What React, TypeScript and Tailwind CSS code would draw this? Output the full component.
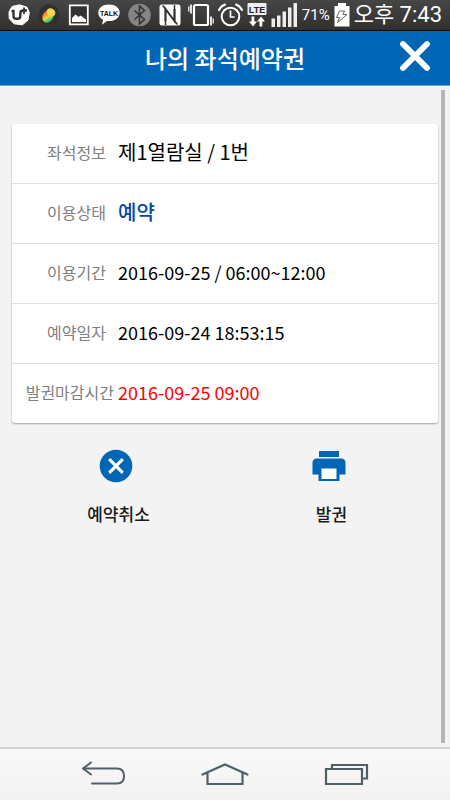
import type { ReactNode } from 'react'

const ROWS = [
  { label: '좌석정보', value: '제1열람실 / 1번', style: 'text-xl text-black' },
  { label: '이용상태', value: '예약', style: 'text-xl font-medium text-[#0049a5]' },
  { label: '이용기간', value: '2016-09-25 / 06:00~12:00', style: 'text-lg text-black' },
  { label: '예약일자', value: '2016-09-24 18:53:15', style: 'text-lg text-black' },
  { label: '발권마감시간', value: '2016-09-25 09:00', style: 'text-lg text-[#ff0000]' },
]

function CarrierIcon() {
  return (
    <svg width="22" height="22" viewBox="0 0 22 22">
      <path d="M4 2.5 11.5.8 19 3.2 21.3 8.5 20 16 14.5 20.8 6 19.8 1.2 14.5 1 8Z" fill="#fff" stroke="#fff" strokeLinejoin="round" />
      <path d="M3.500 7h2v5q0 2.800 2.800 2.800h1.200q2.800 0 2.800-2.800V9.500q0-3 3-3H19" fill="none" stroke="#333" strokeWidth="2.400" />
      <path d="M16 3.500v6.500" stroke="#333" strokeWidth="1.800" />
    </svg>
  )
}

function BallIcon() {
  return (
    <svg width="22" height="22" viewBox="0 0 22 22">
      <defs>
        <linearGradient id="ball" x1="0" y1="0.1" x2="1" y2="0.9">
          <stop offset="0.1" stopColor="#e0524a" />
          <stop offset="0.35" stopColor="#f59a35" />
          <stop offset="0.55" stopColor="#e2dc48" />
          <stop offset="0.75" stopColor="#54c568" />
          <stop offset="1" stopColor="#2e80d0" />
        </linearGradient>
      </defs>
      <circle cx="11" cy="11" r="10.5" fill="#303030" />
      <ellipse cx="10" cy="12.300" rx="5.300" ry="6.800" transform="rotate(28 10 12.300)" fill="url(#ball)" />
      <ellipse cx="13" cy="8.300" rx="4.600" ry="3.800" transform="rotate(35 13 8.300)" fill="#f3d552" />
    </svg>
  )
}

function PictureIcon() {
  return (
    <svg width="22" height="22" viewBox="0 0 22 22">
      <path d="M1.800 1.300h18v19h-18Z" fill="#333" stroke="#fff" strokeWidth="1.800" />
      <path d="M4 18v-4l3.500-3.500 3 2.500 2-1.500 5.500 4V18Z" fill="#fff" />
    </svg>
  )
}

function TalkIcon() {
  return (
    <svg width="22" height="22" viewBox="0 0 22 22">
      <path d="M11 .5C4.800.5.300 4 .300 8.800c0 3.200 2 5.500 4.700 6.900L4 20.800l5-3.900q1 .2 2 .2c6.200 0 10.700-3.500 10.700-8.300S17.200.5 11 .5Z" fill="#fff" />
      <text x="11" y="11.500" textAnchor="middle" fontSize="7" fontWeight="700" fill="#111" className="font-['Liberation_Sans',sans-serif]">
        TALK
      </text>
    </svg>
  )
}

function BluetoothIcon() {
  return (
    <svg width="23" height="24" viewBox="0 0 23 24">
      <circle cx="11.500" cy="12" r="11.300" fill="#858585" />
      <path d="m6.500 7.500 10 9-5 4.500V3l5 4.500-10 9" fill="none" stroke="#343434" strokeWidth="1.600" />
    </svg>
  )
}

function NfcIcon() {
  return (
    <svg width="22" height="24" viewBox="0 0 22 24">
      <rect x=".5" y="1.500" width="21" height="21" rx="2.500" fill="#fff" />
      <path d="M6.500 18V6l9 12V6" fill="none" stroke="#333" strokeWidth="2" />
      <path d="m3.500 2.500 3 3.500v16M18.500 21.500l-3-3.500V2" fill="none" stroke="#333" strokeWidth="1.500" />
    </svg>
  )
}

function VibrateIcon() {
  return (
    <svg width="26" height="24" viewBox="0 0 26 24" fill="none" stroke="#fff">
      <rect x="6" y="2" width="14" height="20" rx="1.500" strokeWidth="2.200" />
      <path d="M3 1.500v9M23 13.500v9" strokeWidth="1.700" />
      <path d="M.8 3.500v5M25.200 15.500v5" strokeWidth="1.200" />
    </svg>
  )
}

function AlarmIcon() {
  return (
    <svg width="25" height="24" viewBox="0 0 25 24" fill="none" stroke="#fff" strokeLinecap="round">
      <circle cx="12.500" cy="13.500" r="8.800" strokeWidth="2" />
      <path d="M12.500 8v6H16" strokeWidth="1.700" />
      <path d="M1 7Q3 3 7 1.500M24 7q-2-4-6-5.500" strokeWidth="2" />
    </svg>
  )
}

function LteIcon() {
  return (
    <svg width="20" height="26" viewBox="0 0 20 26">
      <rect x=".5" y="1" width="19" height="12" rx="1" fill="#eee" />
      <text x="10" y="10.500" textAnchor="middle" fontSize="9" fontWeight="700" fill="#222" className="font-['Liberation_Sans',sans-serif]">
        LTE
      </text>
      <path d="M4.500 14.500h2.800v5H10L6 24.500 2 19.500h2.500ZM12.500 24.500h2.800v-5H18L14 14.500l-4 5h2.500Z" fill="#fff" />
    </svg>
  )
}

function SignalIcon() {
  return (
    <svg width="27" height="24" viewBox="0 0 27 24" fill="#eee">
      <path d="M.5 15.500h3.500V24H.5ZM6 12.500h3.500V24H6ZM11.500 8.500H15V24h-3.500ZM17 4.500h3.500V24H17ZM22.500 0H26v24h-3.500Z" />
    </svg>
  )
}

function BatteryIcon() {
  return (
    <svg width="16" height="24" viewBox="0 0 16 24">
      <path d="M4 0h8v3h3.500v20.500H.5V3H4Z" fill="#fff" />
      <path d="M5.500 8h5L9 11.500h4L3.500 19.500l2-5h-3Z" fill="#fff" stroke="#555" strokeWidth=".9" strokeLinejoin="round" />
    </svg>
  )
}

function StatusBar() {
  return (
    <div className="flex h-[31px] shrink-0 items-center justify-between border-b border-[#150d0b] bg-linear-to-b from-[#464646] to-[#303030] px-2 text-white">
      <div className="flex items-center gap-2">
        <CarrierIcon />
        <BallIcon />
        <PictureIcon />
        <TalkIcon />
        <BluetoothIcon />
        <NfcIcon />
      </div>
      <div className="flex items-center gap-1">
        <VibrateIcon />
        <AlarmIcon />
        <LteIcon />
        <SignalIcon />
        <span className="font-[Roboto,sans-serif] text-[15px]">71%</span>
        <BatteryIcon />
        <span className="font-[Roboto,'Noto_Sans_CJK_KR',sans-serif] text-[22px] leading-6 whitespace-nowrap">오후 7:43</span>
      </div>
    </div>
  )
}

function ActionButton({ label, children }: { label: string; children: ReactNode }) {
  return (
    <button type="button" className="flex flex-col items-center gap-4 text-[17px] leading-6 font-medium text-[#1a1a1a]">
      {children}
      {label}
    </button>
  )
}

export default function App() {
  return (
    <div className="flex min-h-screen flex-col bg-[#f3f3f3] font-['Noto_Sans_CJK_KR',sans-serif]">
      <StatusBar />

      <header className="grid h-[55px] shrink-0 grid-cols-[1fr_auto_1fr] items-center border-b border-[#6ea4d4] bg-[#0066b5] px-4">
        <h1 className="col-start-2 text-2xl font-medium text-white">나의 좌석예약권</h1>
        <button type="button" aria-label="닫기" className="justify-self-end">
          <svg width="36" height="36" viewBox="0 0 36 36" className="block">
            <path d="m5 4 24 24M29 4 5 28" stroke="#fff" strokeWidth="5.800" strokeLinecap="round" />
          </svg>
        </button>
      </header>

      <main className="relative flex-1 px-3 pt-[38px]">
        <div className="absolute top-1 right-[5px] bottom-1 w-1 bg-[#b5b5b5]" />
        <dl className="rounded-[3px] bg-white shadow-[0_1px_2px_rgba(0,0,0,0.35)]">
          {ROWS.map((row) => (
            <div key={row.label} className="flex h-[60px] items-center border-b border-[#dedede] pb-1 last:h-[59px] last:border-b-0">
              <dt className="flex w-[106px] shrink-0 justify-end text-base whitespace-nowrap text-[#808080]">
                <span className={row.label.length > 4 ? 'pr-1' : 'pr-3'}>{row.label}</span>
              </dt>
              <dd className={row.style}>{row.value}</dd>
            </div>
          ))}
        </dl>

        {/* icons sit slightly left of their captions */}
        <div className="mt-[23px] grid grid-cols-2">
          <ActionButton label="예약취소">
            <svg width="40" height="40" viewBox="1 0 40 40">
              <circle cx="18" cy="20" r="16.300" fill="#0066b5" />
              <path d="m11.200 13.200 13.600 13.600M24.800 13.200 11.200 26.800" stroke="#fff" strokeWidth="3.200" />
            </svg>
          </ActionButton>
          <ActionButton label="발권">
            <svg width="40" height="40" viewBox="1 0 40 40" fill="#0066b5">
              <path d="M8 5h20v6H8ZM6 12.500h24q4.500 0 4.500 4.500v11.500H28.500V35h-21v-6.500h-6V17q0-4.500 4.500-4.500Z" />
              <path d="M10.500 22.500h15V33h-15Z" fill="#fff" />
            </svg>
          </ActionButton>
        </div>
      </main>

      <nav className="flex h-[53px] shrink-0 items-center justify-center gap-[72px] border-t-2 border-[#d3d6d5] bg-linear-to-b from-[#f9f9f9] to-[#f2f2f2]">
        <button type="button" aria-label="뒤로">
          <svg width="48" height="28" viewBox="0 0 48 28" fill="none" stroke="#506069" strokeWidth="2" strokeLinecap="round" strokeLinejoin="round">
            <path d="M11 1.500 3 7.500l8 6M4 7.500h33q7 0 7 7.500t-7 7.500H12" />
          </svg>
        </button>
        <button type="button" aria-label="홈">
          <svg width="50" height="28" viewBox="0 0 50 28" fill="none" stroke="#506069" strokeWidth="2.200" strokeLinecap="round">
            <path d="M2.500 13.500 25 3.500l22.500 10M7.500 11.500V23h35V11.500" />
          </svg>
        </button>
        <button type="button" aria-label="최근 앱">
          <svg width="48" height="28" viewBox="0 0 48 28" fill="none" stroke="#506069" strokeWidth="2.200">
            <path d="M4 8h36v15H4ZM10 7.500V4h35v13.500h-4.500" />
          </svg>
        </button>
      </nav>
    </div>
  )
}
